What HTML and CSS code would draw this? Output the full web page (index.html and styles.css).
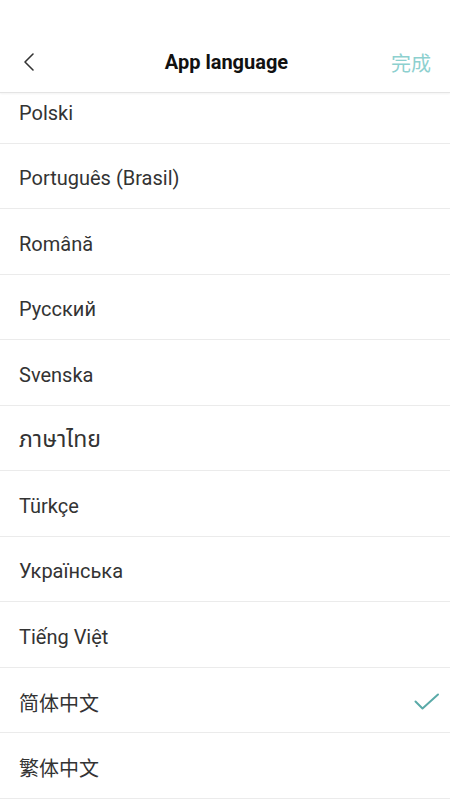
FILE: index.html
```html
<!DOCTYPE html>
<html>
<head>
<meta charset="utf-8">
<link rel="stylesheet" href="styles.css">
</head>
<body>
<div class="screen">
  <header class="header">
    <div class="bar">
      <div class="left">
        <svg class="back" width="14" height="20" viewBox="0 0 14 20"><path d="M11 2 L3 10 L11 18" fill="none" stroke="#333" stroke-width="1.6" stroke-linecap="round" stroke-linejoin="round"/></svg>
      </div>
      <div class="title">App language</div>
      <div class="right"><span class="done">完成</span></div>
    </div>
  </header>
  <div class="viewport">
    <ul class="list">
      <li class="row">Polski</li>
      <li class="row">Português (Brasil)</li>
      <li class="row">Română</li>
      <li class="row">Русский</li>
      <li class="row">Svenska</li>
      <li class="row"><span class="thai">ภาษาไทย</span></li>
      <li class="row">Türkçe</li>
      <li class="row">Українська</li>
      <li class="row">Tiếng Việt</li>
      <li class="row selected">简体中文
        <svg class="check" width="26" height="18" viewBox="0 0 26 18"><path d="M1.5 8.5 L8.5 15.5 L24 1.5" fill="none" stroke="#5aaaa8" stroke-width="2" stroke-linecap="round" stroke-linejoin="round"/></svg>
      </li>
      <li class="row">繁体中文</li>
    </ul>
  </div>
</div>
</body>
</html>
```
FILE: styles.css
```css
html, body {
  margin: 0;
  padding: 0;
  background: #fff;
}
body {
  font-family: Roboto, "Noto Sans", "Noto Sans CJK SC", sans-serif;
  color: #333;
}
.screen {
  width: 450px;
  height: 800px;
  display: flex;
  flex-direction: column;
  overflow: hidden;
}
.header {
  height: 93px;
  flex: none;
  display: flex;
  flex-direction: column;
  justify-content: flex-end;
  border-bottom: 1px solid #e4e4e4;
  box-shadow: 0 1px 2px rgba(0,0,0,0.05);
  position: relative;
  z-index: 1;
  box-sizing: border-box;
}
.bar {
  height: 64px;
  box-sizing: border-box;
  display: grid;
  grid-template-columns: 1fr auto 1fr;
  align-items: center;
  padding: 4px 19px 0 22px;
}
.left {
  display: flex;
  align-items: center;
}
.right {
  display: flex;
  justify-content: flex-end;
}
.back {
  display: block;
}
.title {
  font-size: 20px;
  font-weight: 700;
  color: #111;
}
.done {
  font-family: "Noto Sans CJK SC", sans-serif;
  font-size: 20px;
  color: #8dd0cf;
}
.viewport {
  flex: 1;
  overflow: hidden;
}
.list {
  list-style: none;
  margin: -15px 0 0;
  padding: 0;
}
.row {
  height: 65.5px;
  box-sizing: border-box;
  border-bottom: 1px solid #ebebeb;
  display: flex;
  align-items: center;
  justify-content: space-between;
  padding: 5px 10px 0 19px;
  font-size: 20px;
  color: #333;
  font-family: Roboto, "Noto Sans", "Noto Sans Thai", "Noto Sans CJK SC", sans-serif;
}
.thai {
  font-size: 23px;
}
.check {
  display: block;
}
```
